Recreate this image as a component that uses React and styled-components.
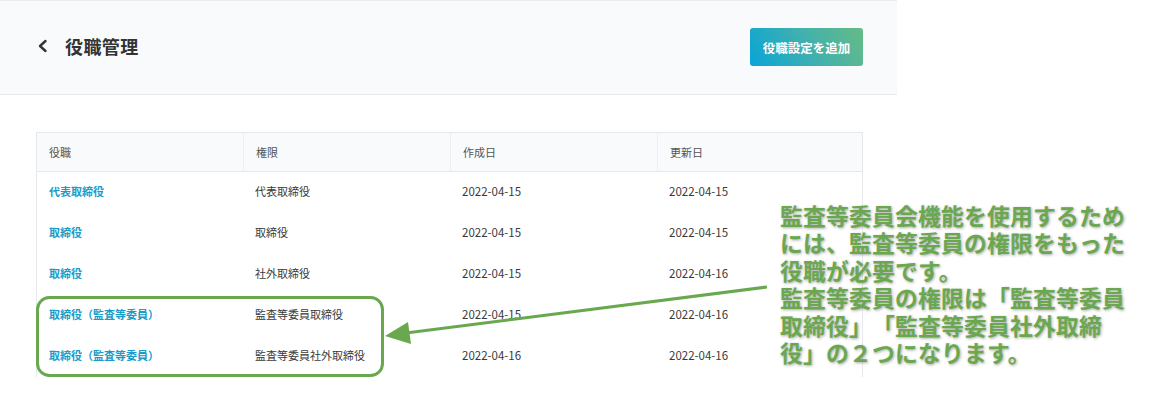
import React from "react";
import styled, { createGlobalStyle } from "styled-components";

const Global = createGlobalStyle`
  html, body { margin: 0; padding: 0; background: #fff; }
  body { font-family: "Noto Sans CJK JP", "Noto Sans", sans-serif; }
`;

const Page = styled.div`
  position: relative;
  width: 1151px;
  height: 394px;
  overflow: hidden;
  background: #fff;
`;

const Main = styled.div`
  width: 897px;
`;

const Header = styled.header`
  box-sizing: border-box;
  height: 95px;
  background: #f9fafc;
  border-top: 1px solid #e9ebee;
  border-bottom: 1px solid #e6e8eb;
  display: flex;
  align-items: center;
  justify-content: space-between;
  padding: 0 34px 0 37px;
`;

const TitleWrap = styled.div`
  display: flex;
  align-items: center;
  gap: 16px;
  margin-top: -3px;
`;

const Title = styled.h1`
  margin: 0;
  font-size: 18px;
  font-weight: 700;
  color: #333;
  letter-spacing: 0.4px;
`;

const AddButton = styled.button`
  width: 113px;
  height: 38px;
  border: none;
  border-radius: 3px;
  background: linear-gradient(60deg, #08a5d6 0%, #3fb0b0 50%, #66bb86 100%);
  color: #fff;
  font-family: inherit;
  font-size: 12.5px;
  font-weight: 700;
  margin-top: -1px;
`;

const Content = styled.div`
  padding: 37px 34px 0 36px;
`;

const Table = styled.div`
  border: 1px solid #e6e8eb;
  border-bottom: none;
`;

const Row = styled.div`
  display: grid;
  grid-template-columns: 206px 207px 207px 1fr;
  height: ${(p) => (p.$head ? "38px" : "41px")};
  background: ${(p) => (p.$head ? "#f9fafb" : "#fff")};
  border-bottom: ${(p) => (p.$head ? "1px solid #e6e8eb" : "none")};
`;

const Cell = styled.div`
  display: flex;
  align-items: center;
  padding-left: 12px;
  padding-bottom: ${(p) => (p.$head ? "1px" : "3px")};
  font-size: ${(p) => (p.$date ? "11.5px" : "11px")};
  font-weight: ${(p) => (p.$link ? 700 : 400)};
  color: ${(p) => (p.$link ? "#1b9bc8" : p.$head ? "#555" : "#3a3a3a")};
  border-left: ${(p) => (p.$head && p.$divider ? "1px solid #eceef1" : "none")};
  white-space: nowrap;
`;

const Overlay = styled.svg`
  position: absolute;
  left: 0;
  top: 0;
  pointer-events: none;
`;

const Note = styled.div`
  position: absolute;
  left: 780px;
  top: 202px;
  font-size: 22.8px;
  line-height: 27.4px;
  font-weight: 700;
  color: #6aa84f;
  text-shadow: 1px 1px 3px rgba(0, 0, 0, 0.35);
  white-space: nowrap;
  letter-spacing: 0.2px;
  text-spacing-trim: space-all;
`;

const rows = [
  ["代表取締役", "代表取締役", "2022-04-15", "2022-04-15"],
  ["取締役", "取締役", "2022-04-15", "2022-04-15"],
  ["取締役", "社外取締役", "2022-04-15", "2022-04-16"],
  ["取締役（監査等委員）", "監査等委員取締役", "2022-04-15", "2022-04-16"],
  ["取締役（監査等委員）", "監査等委員社外取締役", "2022-04-16", "2022-04-16"],
];

export default function App() {
  return (
    <>
      <Global />
      <Page>
        <Main>
          <Header>
            <TitleWrap>
              <svg width="12" height="14" viewBox="0 0 12 14">
                <polyline
                  points="8.5,2 3,7 8.5,12"
                  fill="none"
                  stroke="#333"
                  strokeWidth="2.4"
                  strokeLinecap="round"
                  strokeLinejoin="round"
                />
              </svg>
              <Title>役職管理</Title>
            </TitleWrap>
            <AddButton>役職設定を追加</AddButton>
          </Header>
          <Content>
            <Table>
              <Row $head>
                <Cell $head>役職</Cell>
                <Cell $head $divider>権限</Cell>
                <Cell $head $divider>作成日</Cell>
                <Cell $head $divider>更新日</Cell>
              </Row>
              {rows.map((r, i) => (
                <Row key={i}>
                  <Cell $link>{r[0]}</Cell>
                  <Cell>{r[1]}</Cell>
                  <Cell $date>{r[2]}</Cell>
                  <Cell $date>{r[3]}</Cell>
                </Row>
              ))}
            </Table>
          </Content>
        </Main>
        <Overlay width="1151" height="394" viewBox="0 0 1151 394">
          <rect
            x="37.5"
            y="297.5"
            width="345"
            height="78"
            rx="12"
            ry="12"
            fill="none"
            stroke="#6aa84f"
            strokeWidth="3"
          />
          <line x1="767" y1="287" x2="402" y2="333.5" stroke="#6aa84f" strokeWidth="3" />
          <polygon points="385,336 408,322 411,344" fill="#6aa84f" />
        </Overlay>
        <Note>
          監査等委員会機能を使用するため
          <br />
          には、監査等委員の権限をもった
          <br />
          役職が必要です。
          <br />
          監査等委員の権限は「監査等委員
          <br />
          取締役」「監査等委員社外取締
          <br />
          役」の２つになります。
        </Note>
      </Page>
    </>
  );
}
